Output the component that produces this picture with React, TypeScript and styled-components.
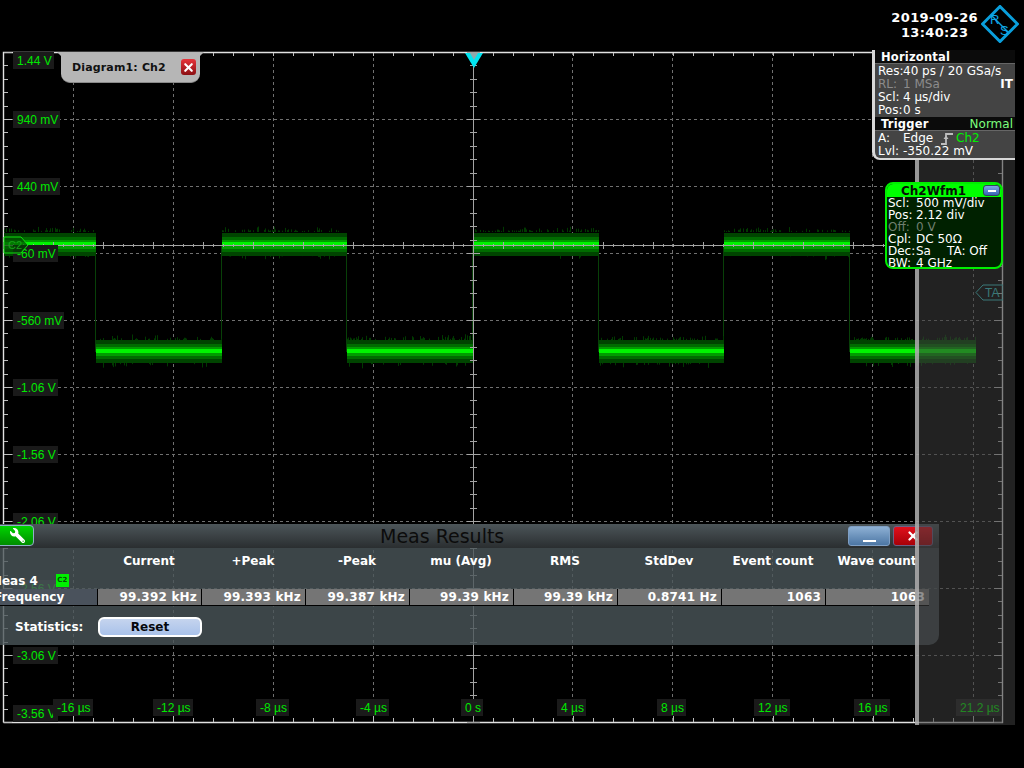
import React from 'react';
import styled, { createGlobalStyle } from 'styled-components';
import { X } from 'lucide-react';
import { FaWrench } from 'react-icons/fa';

const GlobalStyle = createGlobalStyle`
  html, body {
    margin: 0;
    background: #000;
  }
  * {
    box-sizing: border-box;
  }
`;

const Screen = styled.div`
  width: 1024px;
  height: 768px;
  background: #000;
  display: flex;
  flex-direction: column;
  overflow: hidden;
  font-family: 'DejaVu Sans', sans-serif;
  color: #fff;
`;

const TopBar = styled.header`
  height: 50px;
  flex: none;
  display: flex;
  justify-content: flex-end;
  align-items: flex-start;
  gap: 3px;
  padding: 5px 5px 0 0;
`;

const Clock = styled.div`
  font-size: 13px;
  font-weight: bold;
  line-height: 15px;
  text-align: center;
  letter-spacing: 0.35px;
  padding-top: 5px;
`;

const Logo = styled.svg`
  width: 38px;
  height: 38px;
  flex: none;
`;

const Stage = styled.main`
  position: relative;
  flex: 1;
`;

const Scope = styled.svg`
  position: absolute;
  left: 0;
  top: 0;
  display: block;
`;

const AxisLabel = styled.span<{ $x: number; $y: number }>`
  position: absolute;
  left: ${(p) => p.$x}px;
  top: ${(p) => p.$y - 50}px;
  height: 17px;
  padding: 1px 2px 0 4px;
  background: #1a1a1a;
  color: #00e800;
  font-family: 'Liberation Sans', sans-serif;
  font-size: 12px;
  line-height: 17px;
  white-space: nowrap;
`;

const Marker = styled.svg<{ $x: number; $y: number }>`
  position: absolute;
  left: ${(p) => p.$x}px;
  top: ${(p) => p.$y - 50}px;
`;

const DiagramTab = styled.div`
  position: absolute;
  left: 61px;
  top: 2px;
  width: 139px;
  height: 31px;
  background: #b6b6b6;
  border-bottom: 1px solid #8a8a8a;
  border-radius: 0 0 9px 9px;
  display: flex;
  align-items: center;
  justify-content: space-between;
  padding: 0 4px 0 11px;
  color: #111;
  font-size: 11px;
  font-weight: bold;
  letter-spacing: 0.15px;

  &::before,
  &::after {
    content: '';
    position: absolute;
    top: 0;
    width: 0;
    height: 0;
    border-top: 4px solid #b6b6b6;
  }
  &::before {
    left: -4px;
    border-left: 4px solid transparent;
  }
  &::after {
    right: -4px;
    border-right: 4px solid transparent;
  }
`;

const TabClose = styled.div`
  width: 15px;
  height: 16px;
  border-radius: 3px;
  background: linear-gradient(180deg, #e8343a, #8a0f12);
  display: flex;
  align-items: center;
  justify-content: center;
  color: #fff;
`;

const MeasPanel = styled.section`
  position: absolute;
  left: 0;
  top: 474px;
  width: 939px;
  height: 121px;
  background: rgba(75, 86, 90, 0.8);
  border-radius: 0 0 10px 0;
  overflow: hidden;
`;

const MeasTitleBar = styled.div`
  position: relative;
  height: 24px;
  background: linear-gradient(180deg, #4c5559, #2a2e30);
  display: flex;
  align-items: center;
  justify-content: flex-end;
  gap: 3px;
  padding-right: 6px;
`;

const MeasTitle = styled.h2`
  position: absolute;
  left: 380px;
  top: 0;
  margin: 0;
  color: #0c0c0c;
  font-size: 19px;
  font-weight: normal;
  line-height: 24px;
`;

const WrenchButton = styled.button`
  position: absolute;
  left: -4px;
  top: 1px;
  width: 38px;
  height: 21px;
  padding: 0 0 0 4px;
  border: 1px solid #8fb0c8;
  border-radius: 4px;
  background: linear-gradient(180deg, #00d400, #008c00);
  color: #fff;
  display: flex;
  align-items: center;
  justify-content: center;

  svg {
    transform: scaleX(-1);
  }
`;

const WindowButton = styled.button<{ $danger?: boolean }>`
  width: ${(p) => (p.$danger ? 40 : 42)}px;
  height: 20px;
  padding: 0;
  border: 1px solid ${(p) => (p.$danger ? '#6d5f86' : '#7f9fc4')};
  border-radius: 3px;
  background: ${(p) =>
    p.$danger
      ? 'linear-gradient(180deg, #e0101c, #a80008)'
      : 'linear-gradient(180deg, #8db0d4, #4c76a4)'};
  color: #fff;
  display: flex;
  align-items: center;
  justify-content: center;
`;

const MinimizeDash = styled.span`
  display: block;
  width: 13px;
  height: 2px;
  margin-top: 9px;
  background: #fff;
`;

const MeasGrid = styled.div`
  display: grid;
  grid-template-columns: 97px repeat(8, 104px);
  font-size: 12px;
  font-weight: bold;
`;

const ColumnHead = styled.div`
  height: 24px;
  line-height: 26px;
  text-align: center;
  white-space: nowrap;
`;

const MeasNameRow = styled.div`
  grid-column: 1 / -1;
  height: 17px;
  display: flex;
  align-items: center;
  gap: 18px;
  margin-left: -10px;
  font-size: 12px;
`;

const SourceBadge = styled.span`
  width: 13px;
  height: 13px;
  background: #00f000;
  color: #075007;
  font-size: 7px;
  line-height: 13px;
  text-align: center;
`;

const RowName = styled.div`
  height: 17px;
  background: #4a525c;
  border-bottom: 1px solid #000;
  line-height: 16px;
  text-indent: -6px;
  white-space: nowrap;
`;

const ValueCell = styled.div`
  height: 17px;
  padding-right: 4px;
  background: #757575;
  border-left: 1px solid #000;
  border-bottom: 1px solid #000;
  line-height: 16px;
  letter-spacing: 0.2px;
  text-align: right;
  white-space: nowrap;
`;

const StatsRow = styled.div`
  display: flex;
  align-items: center;
  height: 40px;
  padding: 1px 0 0 15px;
  font-size: 12px;
  font-weight: bold;
`;

const StatsLabel = styled.span`
  width: 83px;
`;

const ResetButton = styled.button`
  width: 104px;
  height: 20px;
  padding: 0;
  border: 2px solid #fff;
  border-radius: 6px;
  background: linear-gradient(180deg, #c5d4ee, #a9c2ea);
  color: #05070c;
  font-family: 'DejaVu Sans', sans-serif;
  font-size: 12px;
  font-weight: bold;
  line-height: 16px;
`;

const DimOverlay = styled.div`
  position: absolute;
  left: 915px;
  top: 110px;
  width: 100px;
  height: 565px;
  background: rgba(60, 60, 60, 0.57);
  border-left: 4px solid rgba(190, 190, 190, 0.75);
`;

const SidePanel = styled.aside`
  position: absolute;
  left: 872px;
  top: 0;
  width: 143px;
  height: 110px;
  background: #444;
  border-left: 3px solid #d8d8d8;
  border-bottom: 2px solid #d8d8d8;
  border-radius: 0 0 0 8px;
  font-size: 12px;
  line-height: 13px;
`;

const SideHeader = styled.div`
  height: 14px;
  display: flex;
  justify-content: space-between;
  padding: 1px 2px 0 6px;
  background: #0b0b0b;
  border-bottom: 1px solid #666;
  font-weight: bold;
  font-size: 11.5px;
  letter-spacing: 0.2px;
`;

const TriggerMode = styled.span`
  color: #7dff7d;
  font-size: 12px;
  font-weight: normal;
  letter-spacing: 0;
`;

const InfoRows = styled.div`
  padding: 1px 2px 0 3px;
  height: 53px;

  &:last-child {
    height: auto;
  }
`;

const InfoRow = styled.div<{ $dim?: boolean }>`
  display: grid;
  grid-template-columns: 25px 1fr auto;
  align-items: center;
  height: 13px;
  color: ${(p) => (p.$dim ? '#8c8c8c' : '#fff')};
  white-space: nowrap;
`;

const Tag = styled.span`
  color: #fff;
  font-weight: bold;
  font-size: 12px;
`;

const EdgeRow = styled.span`
  display: flex;
  align-items: center;
  gap: 2px;
`;

const EdgeName = styled.span`
  width: 36px;
`;

const GreenText = styled.span`
  color: #00f000;
`;

const ChannelBox = styled.aside`
  position: absolute;
  left: 885px;
  top: 132px;
  width: 118px;
  height: 87px;
  background: #002100;
  border: 2px solid #00ee00;
  border-radius: 8px;
  overflow: hidden;
  font-size: 12px;
  line-height: 12px;
`;

const ChannelHeader = styled.div`
  height: 13px;
  display: flex;
  align-items: center;
  background: #00ff00;
  padding-right: 1px;
  color: #061006;
  font-size: 12px;
  font-weight: bold;
`;

const ChannelTitle = styled.span`
  flex: 1;
  text-align: center;
  padding-right: 3px;
`;

const ChannelMin = styled.span`
  width: 17px;
  height: 11px;
  border: 1px solid #33415a;
  border-radius: 3px;
  background: linear-gradient(180deg, #7ea6e6, #3762b4);
  display: flex;
  align-items: center;
  justify-content: center;

  &::after {
    content: '';
    width: 8px;
    height: 2px;
    background: #fff;
  }
`;

const ChannelRows = styled.div`
  padding: 0 0 0 1px;
`;

const ChannelRow = styled.div<{ $dim?: boolean }>`
  display: grid;
  grid-template-columns: 28px 31px auto;
  height: 12px;
  color: ${(p) => (p.$dim ? '#6f7f6f' : '#fff')};
  white-space: nowrap;
`;

const ChannelValue = styled.span<{ $wide?: boolean }>`
  grid-column: ${(p) => (p.$wide ? '2 / -1' : 'auto')};
`;

const gridX = [73, 173, 273, 373, 473, 572, 672, 772, 872, 973];
const gridY = [119, 186, 253, 320, 387, 454, 521, 588, 655];

const yLabels: [string, number][] = [
  ['1.44 V', 52],
  ['940 mV', 111],
  ['440 mV', 178],
  ['-60 mV', 245],
  ['-560 mV', 312],
  ['-1.06 V', 379],
  ['-1.56 V', 446],
  ['-2.06 V', 513],
  ['-2.56 V', 580],
  ['-3.06 V', 647],
  ['-3.56 V', 705],
];

const xLabels: [string, number][] = [
  ['-16 µs', 53],
  ['-12 µs', 153],
  ['-8 µs', 256],
  ['-4 µs', 356],
  ['0 s', 461],
  ['4 µs', 557],
  ['8 µs', 657],
  ['12 µs', 754],
  ['16 µs', 854],
  ['21.2 µs', 956],
];

const columns = ['Current', '+Peak', '-Peak', 'mu (Avg)', 'RMS', 'StdDev', 'Event count', 'Wave count'];
const values = ['99.392 kHz', '99.393 kHz', '99.387 kHz', '99.39 kHz', '99.39 kHz', '0.8741 Hz', '1063', '1063'];

const segments: { from: number; to: number; high: boolean }[] = [
  { from: 4, to: 96, high: true },
  { from: 96, to: 222, high: false },
  { from: 222, to: 347, high: true },
  { from: 347, to: 473, high: false },
  { from: 473, to: 599, high: true },
  { from: 599, to: 724, high: false },
  { from: 724, to: 850, high: true },
  { from: 850, to: 976, high: false },
];

const bands = [
  { top: 0, h: 23, fill: '#004400' },
  { top: 4, h: 15, fill: '#006c00' },
  { top: 7, h: 9, fill: '#009c00' },
  { top: 9, h: 4, fill: '#00f400' },
];

// noise spikes are just a seeded scatter so the picture stays the same each run
const spikes = (() => {
  let seed = 7;
  const next = () => {
    seed = (seed * 16807) % 2147483647;
    return seed / 2147483647;
  };
  const out: { x: number; y: number; h: number }[] = [];
  segments.forEach((s) => {
    const top = s.high ? 232 : 340;
    const bottom = top + 23;
    for (let x = s.from; x < s.to; x++) {
      if (next() < 0.38) {
        const h = 1 + next() * next() * 5;
        out.push({ x, y: top - h, h });
      }
      if (next() < 0.12) {
        out.push({ x, y: bottom, h: 1 + next() * next() * 5 });
      }
    }
  });
  return out;
})();

function Waveform() {
  return (
    <g>
      {segments.slice(1).map((s) => (
        <line key={s.from} x1={s.from - 0.5} x2={s.from - 0.5} y1={245} y2={352} stroke="#084008" />
      ))}
      {spikes.map((s, i) => (
        <rect key={i} x={s.x} y={s.y} width={1} height={s.h} fill="#003a00" />
      ))}
      {segments.map((s) =>
        bands.map((b) => (
          <rect
            key={`${s.from}-${b.top}`}
            x={s.from}
            y={(s.high ? 233 : 340) + b.top}
            width={s.to - s.from}
            height={b.h}
            fill={b.fill}
          />
        ))
      )}
    </g>
  );
}

function Graticule() {
  const edgeTicks: number[] = [];
  for (let x = 13; x < 1002; x += 20) edgeTicks.push(x);
  const sideTicks: number[] = [];
  for (let y = 52; y <= 722; y += 13.4) sideTicks.push(y);

  return (
    <g>
      {gridX.map((x) => (
        <line key={x} x1={x + 0.5} x2={x + 0.5} y1={52} y2={722} stroke="#707070" strokeDasharray="3 3" />
      ))}
      {gridY.map((y) => (
        <line key={y} x1={4} x2={1002} y1={y + 0.5} y2={y + 0.5} stroke="#707070" strokeDasharray="3 3" />
      ))}
      <path d="M3.5 722.5V52.5H1002.5V722.5H3.5" fill="none" stroke="#e2e2e2" strokeWidth={1.4} />
      {edgeTicks.map((x) => {
        const major = (x - 473) % 100 === 0;
        return <path key={x} d={`M${x + 0.5} 722V${major ? 714 : 718}M${x + 0.5} 53V56`} stroke="#bdbdbd" />;
      })}
      {sideTicks.map((y, i) => (
        <path
          key={y}
          d={`M4 ${Math.round(y) + 0.5}H${i % 5 === 0 ? 12 : 8}M1002 ${Math.round(y) + 0.5}H${i % 5 === 0 ? 994 : 998}`}
          stroke="#bdbdbd"
        />
      ))}
    </g>
  );
}

function CenterAxes() {
  const xTicks: number[] = [];
  for (let x = 3; x <= 1002; x += 10) xTicks.push(x);
  const yTicks: number[] = [];
  for (let y = 52; y <= 722; y += 13.4) yTicks.push(y);
  return (
    <g stroke="#a4a4a4">
      <line x1={4} x2={1002} y1={245.5} y2={245.5} />
      <line x1={473.5} x2={473.5} y1={60} y2={722} />
      {xTicks.map((x, i) => (
        <line key={x} x1={x + 0.5} x2={x + 0.5} y1={i % 5 === 0 ? 242 : 244} y2={i % 5 === 0 ? 249 : 247} />
      ))}
      {yTicks.map((y, i) => (
        <line
          key={y}
          x1={i % 5 === 0 ? 467 : 470}
          x2={i % 5 === 0 ? 480 : 477}
          y1={Math.round(y) + 0.5}
          y2={Math.round(y) + 0.5}
        />
      ))}
      <polygon points="465,53 483,53 474,68" fill="#00e4f0" stroke="none" />
      <polygon points="470,53 478,53 474,60" fill="#8fa8ac" stroke="none" />
    </g>
  );
}

const App: React.FC = () => {
  return (
    <Screen>
      <GlobalStyle />
      <TopBar>
        <Clock>
          2019-09-26
          <br />
          13:40:23
        </Clock>
        <Logo viewBox="0 0 38 38">
          <polygon points="19,1.5 36.5,19 19,36.5 1.5,19" fill="none" stroke="#0a9fdc" strokeWidth={3} />
          <line x1={10} y1={10} x2={28} y2={28} stroke="#0a9fdc" strokeWidth={1.5} />
          <text x={9} y={19} fill="#0ea8e8" fontFamily="Liberation Sans, sans-serif" fontSize={13}>
            R
          </text>
          <text x={19} y={30} fill="#0ea8e8" fontFamily="Liberation Sans, sans-serif" fontSize={13}>
            S
          </text>
        </Logo>
      </TopBar>

      <Stage>
        <Scope width={1024} height={718} viewBox="0 50 1024 718">
          <Graticule />
          <Waveform />
          <CenterAxes />
        </Scope>

        {yLabels.map(([text, y]) => (
          <AxisLabel key={text} $x={13} $y={y}>
            {text}
          </AxisLabel>
        ))}
        {xLabels.map(([text, x]) => (
          <AxisLabel key={text} $x={x} $y={699}>
            {text}
          </AxisLabel>
        ))}

        <Marker $x={3} $y={236} width={26} height={18} viewBox="0 0 26 18">
          <polygon points="1,1 18,1 25,9 18,17 1,17" fill="rgba(0,70,0,0.7)" stroke="#10e010" />
          <text x={5} y={13} fill="#18a018" fontFamily="Liberation Sans, sans-serif" fontSize={11}>
            C2
          </text>
        </Marker>
        <Marker $x={975} $y={284} width={28} height={17} viewBox="0 0 28 17">
          <polygon points="1,8.5 8,1 28,1 28,16 8,16" fill="none" stroke="#38c8c8" />
          <text x={10} y={13} fill="#38c8c8" fontFamily="Liberation Sans, sans-serif" fontSize={12}>
            TA
          </text>
        </Marker>

        <DiagramTab>
          Diagram1: Ch2
          <TabClose>
            <X size={13} strokeWidth={4} />
          </TabClose>
        </DiagramTab>

        <MeasPanel>
          <MeasTitleBar>
            <WrenchButton>
              <FaWrench size={15} />
            </WrenchButton>
            <MeasTitle>Meas Results</MeasTitle>
            <WindowButton>
              <MinimizeDash />
            </WindowButton>
            <WindowButton $danger>
              <X size={14} strokeWidth={4} />
            </WindowButton>
          </MeasTitleBar>
          <MeasGrid>
            <ColumnHead />
            {columns.map((c) => (
              <ColumnHead key={c}>{c}</ColumnHead>
            ))}
            <MeasNameRow>
              Meas 4
              <SourceBadge>C2</SourceBadge>
            </MeasNameRow>
            <RowName>Frequency</RowName>
            {values.map((v, i) => (
              <ValueCell key={i}>{v}</ValueCell>
            ))}
          </MeasGrid>
          <StatsRow>
            <StatsLabel>Statistics:</StatsLabel>
            <ResetButton>Reset</ResetButton>
          </StatsRow>
        </MeasPanel>

        <DimOverlay />

        <SidePanel>
          <SideHeader>Horizontal</SideHeader>
          <InfoRows>
            <InfoRow>
              <span>Res:</span>
              <span>40 ps / 20 GSa/s</span>
            </InfoRow>
            <InfoRow $dim>
              <span>RL:</span>
              <span>1 MSa</span>
              <Tag>IT</Tag>
            </InfoRow>
            <InfoRow>
              <span>Scl:</span>
              <span>4 µs/div</span>
            </InfoRow>
            <InfoRow>
              <span>Pos:</span>
              <span>0 s</span>
            </InfoRow>
          </InfoRows>
          <SideHeader>
            Trigger
            <TriggerMode>Normal</TriggerMode>
          </SideHeader>
          <InfoRows>
            <InfoRow>
              <span>A:</span>
              <EdgeRow>
                <EdgeName>Edge</EdgeName>
                <svg width={13} height={13} viewBox="0 0 13 13">
                  <path d="M0 12H5V2H12" fill="none" stroke="#bdbdbd" strokeWidth={1.8} />
                  <path d="M2.5 7L5 3.5L7.5 7Z" fill="#bdbdbd" />
                </svg>
                <GreenText>Ch2</GreenText>
              </EdgeRow>
            </InfoRow>
            <InfoRow>
              <span>Lvl:</span>
              <span>-350.22 mV</span>
            </InfoRow>
          </InfoRows>
        </SidePanel>

        <ChannelBox>
          <ChannelHeader>
            <ChannelTitle>Ch2Wfm1</ChannelTitle>
            <ChannelMin />
          </ChannelHeader>
          <ChannelRows>
            <ChannelRow>
              <span>Scl:</span>
              <ChannelValue $wide>500 mV/div</ChannelValue>
            </ChannelRow>
            <ChannelRow>
              <span>Pos:</span>
              <ChannelValue $wide>2.12 div</ChannelValue>
            </ChannelRow>
            <ChannelRow $dim>
              <span>Off:</span>
              <ChannelValue $wide>0 V</ChannelValue>
            </ChannelRow>
            <ChannelRow>
              <span>Cpl:</span>
              <ChannelValue $wide>DC 50Ω</ChannelValue>
            </ChannelRow>
            <ChannelRow>
              <span>Dec:</span>
              <ChannelValue>Sa</ChannelValue>
              <span>TA: Off</span>
            </ChannelRow>
            <ChannelRow>
              <span>BW:</span>
              <ChannelValue $wide>4 GHz</ChannelValue>
            </ChannelRow>
          </ChannelRows>
        </ChannelBox>
      </Stage>
    </Screen>
  );
};

export default App;
